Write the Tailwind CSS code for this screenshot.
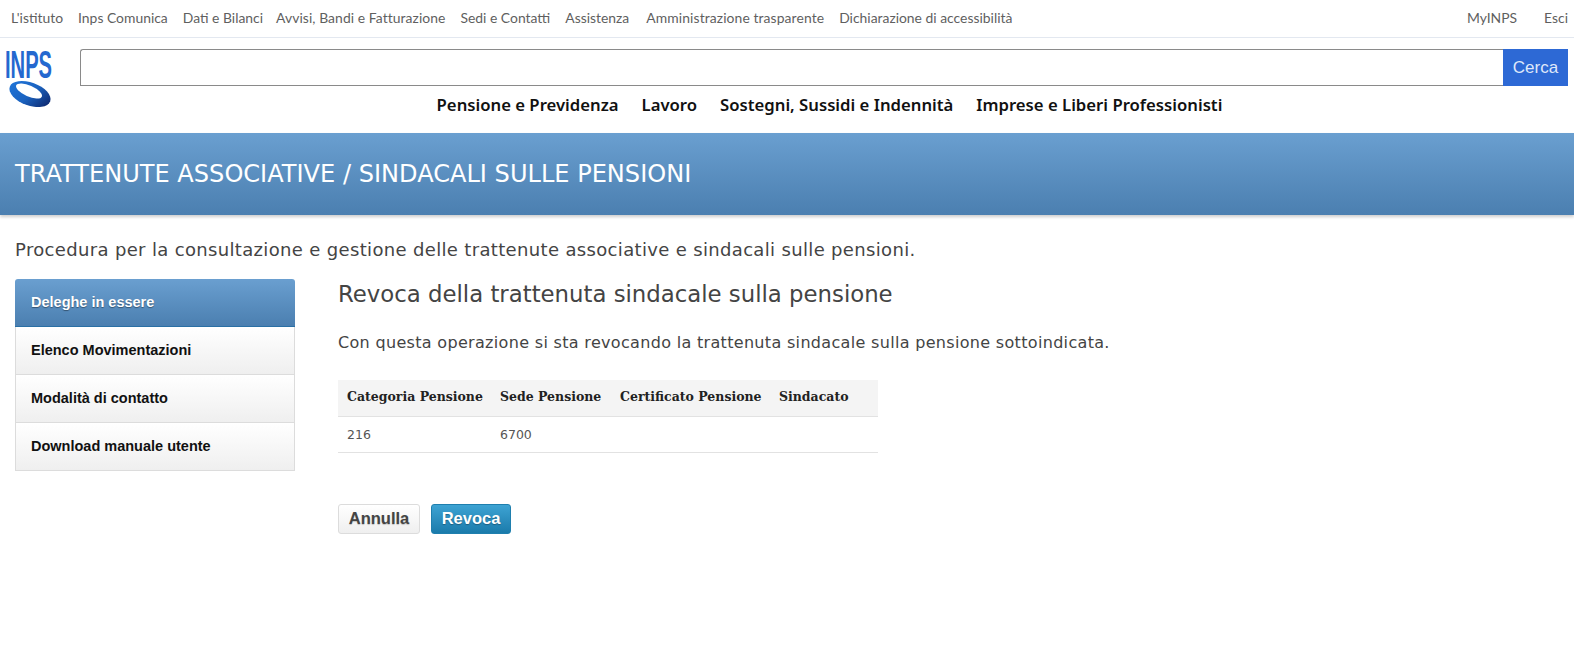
<!DOCTYPE html>
<html lang="it">
<head>
    <meta charset="UTF-8">
    <title>Trattenute associative / sindacali sulle pensioni</title>
    <script src="https://cdn.jsdelivr.net/npm/@tailwindcss/browser@4"></script>
</head>
<body class="bg-white font-['DejaVu_Sans',sans-serif] text-[#444]">
    <!-- Top links -->
    <div class="flex justify-between h-[38px] items-center border-b border-[#e3e8f0] pl-[11px] pr-[6px] font-['Lato',sans-serif] text-[13.9px] text-[#5f5f5f]">
        <nav class="flex gap-[15px]">
            <a>L'istituto</a>
            <a>Inps Comunica</a>
            <a>Dati e Bilanci</a>
            <a class="-ml-[2px] tracking-[0.07px]">Avvisi, Bandi e Fatturazione</a>
            <a>Sedi e Contatti</a>
            <a>Assistenza</a>
            <a class="ml-[2px] tracking-[0.1px]">Amministrazione trasparente</a>
            <a>Dichiarazione di accessibilità</a>
        </nav>
        <nav class="flex gap-[27px]">
            <a>MyINPS</a>
            <a>Esci</a>
        </nav>
    </div>

    <!-- Logo, search, main nav -->
    <header class="flex h-[95px] pl-[5px] pr-[6px]">
        <div class="w-[75px] shrink-0 pt-[11px]">
            <svg width="48" height="60" viewBox="0 0 48 60" class="overflow-visible">
                <defs>
                    <linearGradient id="ring" x1="0" y1="0.2" x2="1" y2="0.5">
                        <stop offset="0" stop-color="#1f74d8"/>
                        <stop offset="0.55" stop-color="#1b63c0"/>
                        <stop offset="1" stop-color="#0f2f78"/>
                    </linearGradient>
                </defs>
                <text x="0" y="29" font-family="Liberation Sans Narrow, Liberation Sans, sans-serif" font-size="38" font-weight="700" fill="#2468cf" textLength="47" lengthAdjust="spacingAndGlyphs">INPS</text>
                <ellipse cx="25" cy="45" rx="21.5" ry="11.5" transform="rotate(20 25 45)" fill="url(#ring)"/>
                <ellipse cx="24" cy="42" rx="14" ry="5.5" transform="rotate(24 24 42)" fill="#fff"/>
            </svg>
        </div>
        <div class="flex-1 flex flex-col pt-[11px]">
            <div class="flex h-[37px]">
                <input type="text" class="flex-1 border border-[#8a8a8a] border-r-0 rounded-tl-[3px] bg-white">
                <button class="w-[65px] bg-[#2d69d5] text-[#dfe8fa] text-[17px] font-['Liberation_Sans',sans-serif]">Cerca</button>
            </div>
            <nav class="flex justify-center gap-[23px] mt-[6px] font-['Noto_Sans',sans-serif] font-semibold text-[16.7px] text-[#111] pl-[11px]">
                <a>Pensione e Previdenza</a>
                <a>Lavoro</a>
                <a>Sostegni, Sussidi e Indennità</a>
                <a>Imprese e Liberi Professionisti</a>
            </nav>
        </div>
    </header>

    <!-- Blue title band -->
    <div class="flex items-center h-[82px] pl-[15px] bg-linear-to-b from-[#6a9fd0] to-[#4b7fb0] shadow-[0_2px_3px_rgba(0,0,0,0.2)]">
        <h1 class="text-[24.07px] text-white font-['DejaVu_Sans',sans-serif]">TRATTENUTE ASSOCIATIVE / SINDACALI SULLE PENSIONI</h1>
    </div>

    <p class="pl-[15px] mt-[23px] text-[18px] tracking-[0.34px] leading-[24px] text-[#444]">Procedura per la consultazione e gestione delle trattenute associative e sindacali sulle pensioni.</p>

    <div class="flex mt-[17px] pl-[15px]">
        <!-- Side menu -->
        <aside class="w-[280px] shrink-0 font-['Liberation_Sans',sans-serif] font-bold text-[14.5px] text-[#111]">
            <a class="flex items-center h-[48px] pl-[16px] rounded-t-[3px] bg-linear-to-b from-[#6a9fd0] to-[#4b7fb0] border-b border-[#2a70a5] text-white [text-shadow:0_1px_1px_rgba(0,0,0,0.4)]">Deleghe in essere</a>
            <a class="flex items-center h-[48px] pl-[15px] bg-linear-to-b from-white to-[#efefef] border-x border-b border-[#dcdcdc]">Elenco Movimentazioni</a>
            <a class="flex items-center h-[48px] pl-[15px] bg-linear-to-b from-white to-[#efefef] border-x border-b border-[#dcdcdc]">Modalità di contatto</a>
            <a class="flex items-center h-[48px] pl-[15px] bg-linear-to-b from-white to-[#efefef] border-x border-b border-[#dcdcdc]">Download manuale utente</a>
        </aside>

        <main class="ml-[43px]">
            <h2 class="text-[22.8px] leading-[28px] text-[#444] mt-[1px]">Revoca della trattenuta sindacale sulla pensione</h2>
            <p class="mt-[25px] text-[16px] tracking-[0.32px] leading-[20px] text-[#444]">Con questa operazione si sta revocando la trattenuta sindacale sulla pensione sottoindicata.</p>

            <table class="mt-[27px] w-[540px] text-[12.5px] text-left">
                <thead>
                    <tr class="h-[36px] bg-[#f4f4f4] border-b border-[#e2e2e2] font-['DejaVu_Serif',serif] text-[#222]">
                        <th class="pl-[9px] font-bold w-[153px]">Categoria Pensione</th>
                        <th class="pl-[9px] font-bold w-[120px]">Sede Pensione</th>
                        <th class="pl-[9px] font-bold w-[159px]">Certificato Pensione</th>
                        <th class="pl-[9px] font-bold">Sindacato</th>
                    </tr>
                </thead>
                <tbody>
                    <tr class="h-[36px] border-b border-[#e2e2e2] text-[#555]">
                        <td class="pl-[9px] pt-[2px]">216</td>
                        <td class="pl-[9px] pt-[2px]">6700</td>
                        <td></td>
                        <td></td>
                    </tr>
                </tbody>
            </table>

            <div class="flex gap-[11px] mt-[51px] font-['Liberation_Sans',sans-serif] font-bold text-[16.5px]">
                <button class="w-[82px] h-[30px] rounded-[3px] border border-[#dcdcdc] bg-linear-to-b from-white to-[#efefef] text-[#444] [text-shadow:0_1px_1px_rgba(0,0,0,0.2)]">Annulla</button>
                <button class="w-[80px] h-[30px] rounded-[3px] border border-[#1f7fae] bg-linear-to-b from-[#3da3d3] to-[#1a7bab] text-white [text-shadow:0_1px_1px_rgba(0,0,0,0.3)]">Revoca</button>
            </div>
        </main>
    </div>
</body>
</html>
